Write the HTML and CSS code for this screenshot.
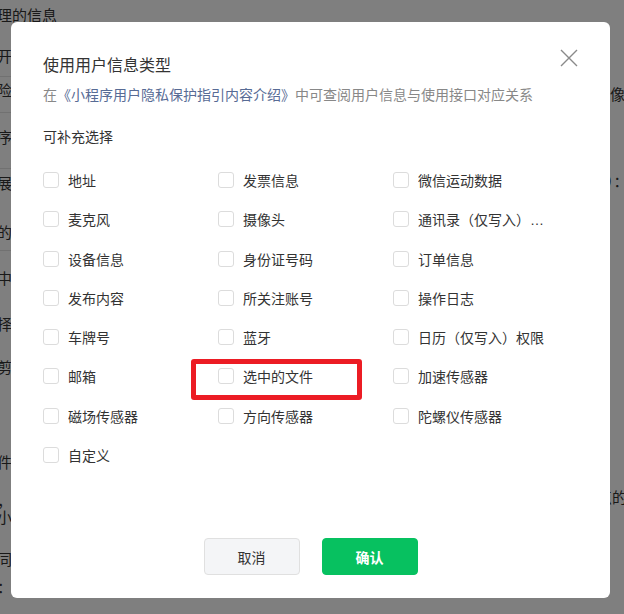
FILE: index.html
```html
<!DOCTYPE html>
<html lang="zh-CN">
  <head>
    <meta charset="UTF-8" />
    <meta name="viewport" content="width=device-width, initial-scale=1.0" />
    <title>使用用户信息类型</title>
    <link rel="stylesheet" href="styles.css">
  </head>
  <body>
    <!-- page behind the dialog -->
    <div class="page">
      <div class="page-left">
        <p class="mt6">理的信息</p>
        <p class="mt21">开发者收集的信息</p>
        <hr class="mt9" />
        <p class="mt4">险类型说明</p>
        <hr class="mt11" />
        <p class="mt15">序用户隐私</p>
        <hr class="mt20" />
        <p class="mt5">展示说明</p>
        <p class="mt29">的用户信息</p>
        <hr class="mt7" />
        <p class="mt18">中填写</p>
        <p class="mt26">择用途</p>
        <p class="mt23">剪贴板</p>
        <p class="mt75">件信息</p>
        <p class="mt21 two">，<br />小程序</p>
        <p class="mt24">同意</p>
        <p class="mt8">：法律</p>
      </div>
      <div class="page-right">
        <p class="mt85">像头</p>
        <p class="mt67 paren">）：</p>
        <p class="mt296 shift">点的</p>
      </div>
    </div>

    <div class="mask">
      <div class="dialog">
        <div class="dialog-head">
          <h2 class="dialog-title">使用用户信息类型</h2>
          <button class="dialog-close" aria-label="关闭">
            <svg width="18" height="18" viewBox="0 0 18 18">
              <path d="M1 1L17 17M17 1L1 17" stroke="#8a8a8a" stroke-width="1.4" fill="none" />
            </svg>
          </button>
        </div>
        <p class="dialog-desc">
          在<a href="#">《小程序用户隐私保护指引内容介绍》</a>中可查阅用户信息与使用接口对应关系
        </p>
        <p class="dialog-label">可补充选择</p>

        <div class="options">
          <label class="option"><span class="box"></span><span class="text">地址</span></label>
          <label class="option"><span class="box"></span><span class="text">发票信息</span></label>
          <label class="option"><span class="box"></span><span class="text">微信运动数据</span></label>

          <label class="option"><span class="box"></span><span class="text">麦克风</span></label>
          <label class="option"><span class="box"></span><span class="text">摄像头</span></label>
          <label class="option"><span class="box"></span><span class="text">通讯录（仅写入）权限</span></label>

          <label class="option"><span class="box"></span><span class="text">设备信息</span></label>
          <label class="option"><span class="box"></span><span class="text">身份证号码</span></label>
          <label class="option"><span class="box"></span><span class="text">订单信息</span></label>

          <label class="option"><span class="box"></span><span class="text">发布内容</span></label>
          <label class="option"><span class="box"></span><span class="text">所关注账号</span></label>
          <label class="option"><span class="box"></span><span class="text">操作日志</span></label>

          <label class="option"><span class="box"></span><span class="text">车牌号</span></label>
          <label class="option"><span class="box"></span><span class="text">蓝牙</span></label>
          <label class="option"><span class="box"></span><span class="text">日历（仅写入）权限</span></label>

          <label class="option"><span class="box"></span><span class="text">邮箱</span></label>
          <label class="option marked"><span class="box"></span><span class="text">选中的文件</span></label>
          <label class="option"><span class="box"></span><span class="text">加速传感器</span></label>

          <label class="option"><span class="box"></span><span class="text">磁场传感器</span></label>
          <label class="option"><span class="box"></span><span class="text">方向传感器</span></label>
          <label class="option"><span class="box"></span><span class="text">陀螺仪传感器</span></label>

          <label class="option"><span class="box"></span><span class="text">自定义</span></label>
        </div>

        <div class="dialog-foot">
          <button class="btn btn-default">取消</button>
          <button class="btn btn-primary">确认</button>
        </div>
      </div>
    </div>
  </body>
</html>
```

FILE: styles.css
```css
* {
  box-sizing: border-box;
}
body {
  margin: 0;
  height: 614px;
  overflow: hidden;
  background: #fff;
  color: #333;
  font-family: "Liberation Sans", "Noto Sans CJK SC", sans-serif;
}

/* page under the mask */
.page {
  display: flex;
  font-size: 15px;
  color: #333;
}
.page-left {
  width: 80px;
  margin-left: -3px;
  white-space: nowrap;
}
.page-right {
  margin-left: auto;
  width: 15px;
  white-space: nowrap;
}
.page p {
  margin: 0;
  height: 20px;
  line-height: 20px;
}
.page p.two {
  height: 32px;
  line-height: 16px;
}
.page hr {
  margin: 0;
  border: 0;
  height: 1px;
  width: 200px;
  background: #e2e2e2;
}
.page-right p {
  padding-left: 1px;
}
.page-right .paren {
  margin-left: -4px;
}
.page-right .shift {
  margin-left: -13px;
}
.mt4 { margin-top: 4px !important; }
.mt5 { margin-top: 5px !important; }
.mt6 { margin-top: 6px !important; }
.mt7 { margin-top: 7px !important; }
.mt8 { margin-top: 8px !important; }
.mt9 { margin-top: 9px !important; }
.mt11 { margin-top: 11px !important; }
.mt15 { margin-top: 15px !important; }
.mt18 { margin-top: 18px !important; }
.mt20 { margin-top: 20px !important; }
.mt21 { margin-top: 21px !important; }
.mt23 { margin-top: 23px !important; }
.mt24 { margin-top: 24px !important; }
.mt26 { margin-top: 26px !important; }
.mt29 { margin-top: 29px !important; }
.mt67 { margin-top: 67px !important; }
.mt75 { margin-top: 75px !important; }
.mt85 { margin-top: 85px !important; }
.mt296 { margin-top: 296px !important; }

/* dialog */
.mask {
  position: fixed;
  inset: 0;
  background: rgba(0, 0, 0, 0.5);
  display: flex;
  align-items: flex-start;
  padding: 22px 0 0 11px;
}
.dialog {
  width: 599px;
  height: 576px;
  background: #fff;
  border-radius: 6px;
  padding: 32px 32px 23px;
  display: flex;
  flex-direction: column;
}
.dialog-head {
  display: flex;
  justify-content: space-between;
  align-items: flex-start;
}
.dialog-title {
  margin: 0;
  font-size: 16px;
  font-weight: normal;
  line-height: 24px;
  color: #333;
}
.dialog-close {
  margin-top: -5px;
  padding: 0;
  border: 0;
  background: none;
  width: 18px;
  height: 18px;
  cursor: pointer;
}
.dialog-close svg {
  display: block;
}
.dialog-desc {
  margin: 6px 0 0;
  font-size: 14px;
  line-height: 22px;
  color: #888;
}
.dialog-desc a {
  color: #576b95;
  text-decoration: none;
}
.dialog-label {
  margin: 20px 0 0;
  font-size: 14px;
  line-height: 22px;
  color: #333;
}

.options {
  margin-top: 21px;
  display: grid;
  grid-template-columns: repeat(3, 175px);
  row-gap: 17.3px;
}
.option {
  display: flex;
  align-items: center;
  height: 22px;
  font-size: 14px;
  color: #333;
  cursor: pointer;
}
.option .box {
  flex: none;
  width: 16px;
  height: 16px;
  margin-right: 9px;
  border: 1px solid #dcdcdc;
  border-radius: 3px;
  background: #fff;
}
.option .text {
  max-width: 130px;
  overflow: hidden;
  white-space: nowrap;
  text-overflow: ellipsis;
}
.option.marked {
  position: relative;
}
.option.marked::after {
  content: "";
  position: absolute;
  top: -6px;
  left: -27px;
  right: 31px;
  bottom: -13px;
  border: 5px solid #ec1c24;
  border-radius: 3px;
}

.dialog-foot {
  margin-top: auto;
  display: flex;
  justify-content: center;
  gap: 22px;
}
.btn {
  width: 96px;
  height: 37px;
  border-radius: 4px;
  font-family: inherit;
  font-size: 14px;
  cursor: pointer;
}
.btn-default {
  background: #f4f5f7;
  border: 1px solid #e0e0e0;
  color: #333;
}
.btn-primary {
  background: #07c160;
  border: 1px solid #07c160;
  color: #fff;
  font-weight: bold;
}
```
